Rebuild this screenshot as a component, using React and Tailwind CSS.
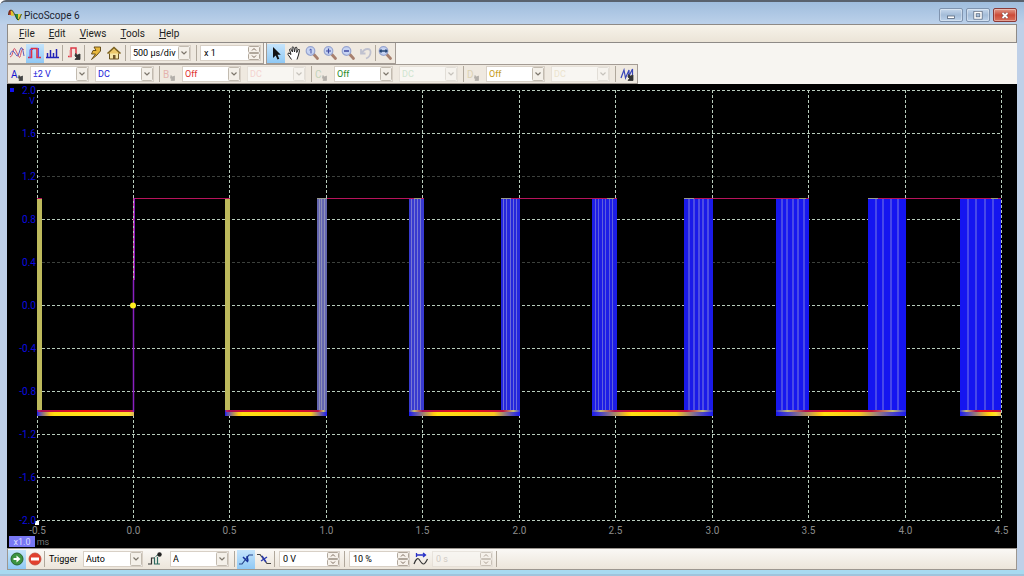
import React from "react";

const cx = (...c) => c.filter(Boolean).join(" ");

function Sep() {
  return <span className="h-4 w-px shrink-0 bg-[#b0a89c]" />;
}

function Select({ label, value, options = [], color = "text-black", className = "w-[59px]", disabled }) {
  return (
    <div className={cx("relative flex h-4 shrink-0 border", disabled ? "border-[#e6e0d8] bg-[#f8f6f2]" : "border-[#d8d0c6] bg-white", className)}>
      <select
        aria-label={label}
        disabled={disabled}
        defaultValue={value}
        className={cx("h-full w-full appearance-none bg-transparent pl-0.5 text-[9px] leading-[14px] opacity-100 outline-none", color)}
      >
        {[value, ...options].map((o) => (
          <option key={o}>{o}</option>
        ))}
      </select>
      <svg viewBox="0 0 12 14" className={cx("pointer-events-none absolute right-0 top-0 h-[14px] w-3", disabled && "opacity-40")}>
        <rect x=".5" y=".5" width="11" height="13" rx="1" fill="#f4f0e9" stroke="#c2bbb0" />
        <path d="M3.500 5.500 6 8l2.500-2.500" fill="none" stroke="#7d766c" strokeWidth="1.200" />
      </svg>
    </div>
  );
}

function Spinner({ label, value, disabled }) {
  return (
    <div className={cx("flex h-4 w-[61px] shrink-0 border", disabled ? "border-[#e0dad2] bg-[#f8f6f2] opacity-60" : "border-[#d8d0c6] bg-white")}>
      <input
        aria-label={label}
        defaultValue={value}
        disabled={disabled}
        className={cx("min-w-0 flex-1 bg-transparent pl-[3px] text-[9px] leading-[14px] outline-none", disabled ? "text-[#b8b4ae]" : "text-black")}
      />
      <div className="flex w-3 flex-col">
        {["up", "down"].map((d) => (
          <button key={d} aria-label={label + " " + d} disabled={disabled} className="h-[7px] w-3">
            <svg viewBox="0 0 12 7" className="block h-[7px] w-3">
              <rect x=".5" y=".5" width="11" height="6" rx="1" fill="#f6f1ea" stroke="#b0a79b" />
              <path d={d === "up" ? "M4 4.500 6 2.500l2 2" : "M4 2.500l2 2 2-2"} fill="none" stroke="#7a6a5c" />
            </svg>
          </button>
        ))}
      </div>
    </div>
  );
}

function Tool({ label, active, disabled, children }) {
  return (
    <button
      aria-label={label}
      disabled={disabled}
      className={cx("flex h-[19px] w-[18px] shrink-0 items-center justify-center", active && "bg-linear-to-b from-[#c5e4fb] to-[#8fc9f5]", disabled && "opacity-35")}
    >
      <svg viewBox="0 0 16 16" className="size-4" fill="none">{children}</svg>
    </button>
  );
}

function Lens({ children }) {
  return (
    <>
      <path d="m9.500 9 4 4.500" stroke="#a8806e" strokeWidth="2.800" strokeLinecap="round" />
      <circle cx="6.500" cy="6" r="4.300" fill="#c6d3f2" stroke="#97a5d0" strokeWidth="1.200" />
      {children}
    </>
  );
}

const Corner = () => <path d="M8.500 8.500 10.500 10l2.500-1v5.500H8l1.500-2L8 11z" fill="#333" stroke="#333" strokeWidth=".8" />;

const CHANNELS = [
  { id: "A", hex: "#1515d0", color: "text-[#1a1ad8]", range: "±2 V" },
  { id: "B", hex: "#d05050", color: "text-[#e03030]", faint: "text-[#f4d3d0]", range: "Off" },
  { id: "C", hex: "#70a870", color: "text-[#1f8a2b]", faint: "text-[#cfe5d0]", range: "Off" },
  { id: "D", hex: "#b8a860", color: "text-[#c49a20]", faint: "text-[#ece4ce]", range: "Off" },
];

function Channel({ ch }) {
  const off = ch.range === "Off";
  return (
    <div className="flex items-center">
      <button aria-label={"Channel " + ch.id + " options"} className={cx("w-[22px] shrink-0", off && "opacity-35")}>
        <svg viewBox="0 0 22 16" className="block h-4 w-[22px]">
          <text x="3" y="12" fontSize="10" fill={ch.hex}>{ch.id}</text>
          <path d="M11 9.500 12.500 11l2-1v4.500H11l.5-1.500L10.500 12z" fill="#444" stroke="#444" strokeWidth=".8" />
        </svg>
      </button>
      <div className="flex gap-1.5">
        <Select label={"Channel " + ch.id + " range"} value={ch.range} options={["±5 V"]} color={ch.color} />
        <Select label={"Channel " + ch.id + " coupling"} value="DC" options={["AC"]} color={off ? ch.faint : ch.color} disabled={off} />
      </div>
      <span className="w-[5px]" />
      <Sep />
    </div>
  );
}

const BURSTS = [
  { x: 37, w: 5, fill: "#bdb95c" },
  { x: 225, w: 5, fill: "#bdb95c" },
  { x: 317, w: 10, fill: "#6466b0", lines: 3, line: "#9092b8" },
  { x: 409, w: 15, fill: "#383ad0", lines: 4, line: "#7879d4" },
  { x: 501, w: 19, fill: "#2426dc", lines: 5, line: "#6c6dda" },
  { x: 592, w: 25, fill: "#1d1de6", lines: 6, line: "#5e5fdc" },
  { x: 684, w: 29, fill: "#1a1ae8", lines: 5, line: "#4c4de4", lw: 2 },
  { x: 776, w: 33, fill: "#1717ee", lines: 5, line: "#494ae6", lw: 2 },
  { x: 868, w: 38, fill: "#1515f0", lines: 4, line: "#4748ea", lw: 2 },
  { x: 960, w: 41, fill: "#1515f0", lines: 4, line: "#4748ea", lw: 2 },
];
const HIGHS = [[134, 230], [317, 424], [501, 617], [684, 809], [868, 1001]];
const LOWS = [
  { a: 37, b: 134, l: 5, r: 0 },
  { a: 225, b: 327, l: 5, r: 10 },
  { a: 409, b: 520, l: 15, r: 19 },
  { a: 592, b: 713, l: 25, r: 29 },
  { a: 776, b: 906, l: 33, r: 38 },
  { a: 960, b: 1001, l: 18, r: 0 },
];
const VOLTS = ["2.0", "1.6", "1.2", "0.8", "0.4", "0.0", "-0.4", "-0.8", "-1.2", "-1.6", "-2.0"];
const TIMES = ["-0.5", "0.0", "0.5", "1.0", "1.5", "2.0", "2.5", "3.0", "3.5", "4.0", "4.5"];
const gx = (i) => Math.floor(37 + i * 96.45) + 0.5;
const gy = (i) => 90.5 + i * 43;

function Scope() {
  return (
    <svg viewBox="7 84 1010 464" className="block h-full w-full" role="img" aria-label="Oscilloscope trace">
      <defs>
        {LOWS.map(({ a, b, l, r }, i) => {
          const w = b - a;
          return (
            <React.Fragment key={i}>
              <linearGradient id={"y" + i}>
                <stop offset="0" stopColor="#1a1af0" />
                <stop offset={(l * 0.4) / w} stopColor="#5048c0" />
                <stop offset={(l * 1.1 + 8) / w} stopColor="#ffc814" />
                <stop offset={(l * 1.1 + 12) / w} stopColor="#ffe010" />
                <stop offset={1 - (r * 1.1 + 5) / w} stopColor={r ? "#f8c820" : "#ffe030"} />
                <stop offset={1 - (r * 0.4) / w} stopColor={r ? "#5048c0" : "#d8b060"} />
                <stop offset="1" stopColor={r ? "#1a1af0" : "#d0b070"} />
              </linearGradient>
              <linearGradient id={"r" + i}>
                <stop offset="0" stopColor="#3030e0" />
                <stop offset={(l * 0.35) / w} stopColor={l > 5 ? "#c8c070" : "#c02060"} />
                <stop offset={(l * 0.9) / w} stopColor="#b01050" />
                <stop offset="0.5" stopColor="#f01010" />
                <stop offset={1 - (r * 0.9) / w} stopColor="#c01040" />
                <stop offset={1 - (r * 0.35) / w} stopColor={r ? "#c8c070" : "#c01040"} />
                <stop offset="1" stopColor={r ? "#3030e0" : "#c01040"} />
              </linearGradient>
            </React.Fragment>
          );
        })}
      </defs>
      <g strokeDasharray="3 2" fill="none">
        {VOLTS.map((v, i) => (
          <path key={v} d={`M37 ${gy(i)}H1002`} stroke={i === 2 || i === 4 ? "#3c403c" : "#b8ccbc"} />
        ))}
        {TIMES.map((t, i) => (
          <path key={t} d={`M${gx(i)} 90V520`} stroke="#b8ccbc" />
        ))}
      </g>
      {BURSTS.map(({ x, w, fill, lines = 0, line, lw = 1 }) => (
        <g key={x}>
          <rect x={x} y="198" width={w} height="217" fill={fill} />
          {Array.from({ length: lines }, (_, k) => (
            <rect key={k} x={Math.round(x + ((k + 1) * w) / (lines + 1)) - 1} y="199" width={lw} height="212" fill={line} />
          ))}
        </g>
      ))}
      {HIGHS.map(([a, b], i) => (
        <g key={a}>
          <rect x={a} y="198" width={b - a} height="1" fill="#b8145c" />
          {i > 0 && <rect x={a} y="198" width="10" height="1" fill="#9a9a90" />}
          {i > 0 && <rect x={b - 10} y="198" width="7" height="1" fill="#9a9a70" />}
        </g>
      ))}
      <rect x="37" y="198" width="5" height="1" fill="#b8145c" />
      {LOWS.map(({ a, b }, i) => (
        <g key={a}>
          <rect x={a} y="410" width={b - a} height="2" fill={`url(#r${i})`} />
          <rect x={a} y="412" width={b - a} height="4" fill={`url(#y${i})`} />
        </g>
      ))}
      <path d="M134.500 198V280" stroke="#8a18c0" />
      <path d="M133.500 198V280" stroke="#c05090" strokeDasharray="3 2" />
      <path d="M133.500 280V412" stroke="#8a20c0" strokeWidth="1.500" />
      <circle cx="133" cy="305.500" r="3" fill="#ffee20" />
      <rect x="10" y="88" width="4" height="4" fill="#1010f0" />
      <rect x="35" y="521" width="4" height="4" fill="#fff" />
      <g fontSize="10" fill="#0c0ce0" textAnchor="end">
        {VOLTS.map((v, i) => (
          <text key={v} x="36" y={gy(i) + 3}>{v}</text>
        ))}
        <text x="35" y="104" fontSize="9">V</text>
      </g>
      <g fontSize="10" fill="#8c8c8c" textAnchor="middle">
        {TIMES.map((t, i) => (
          <text key={t} x={gx(i)} y="534">{t}</text>
        ))}
        <text x="43" y="545" fontSize="9" fill="#777">ms</text>
      </g>
      <rect x="9" y="536" width="26" height="11" fill="#7878f4" />
      <text x="22" y="545" fontSize="9" fill="#dcdcff" textAnchor="middle">x1.0</text>
    </svg>
  );
}

function WinButton({ label, close, children }) {
  return (
    <button
      aria-label={label}
      className={cx(
        "flex h-[14px] w-6 items-center justify-center rounded-xs border shadow-[inset_0_0_0_1px_rgba(255,255,255,0.35)]",
        close ? "border-[#8a3a38] bg-linear-to-b from-[#e09a8c] via-[#cc4a38] to-[#d8705c]" : "border-[#7f93ae] bg-linear-to-b from-[#c6d8ec] via-[#a4bcd8] to-[#bcd2ea]"
      )}
    >
      <svg viewBox="0 0 10 9" className="h-[9px] w-2.5">{children}</svg>
    </button>
  );
}

export default function App() {
  return (
    <div className="flex h-screen flex-col overflow-hidden rounded-tl-md border-t-2 border-t-[#59626e] bg-[#bfd0e8] font-['Roboto','Liberation_Sans',sans-serif] text-[9px] leading-none text-[#222]">
      <header className="flex h-[22px] shrink-0 items-center bg-linear-to-b from-[#9fbddd] to-[#bcd1ea] pl-2 pr-[7px]">
        <svg viewBox="0 0 14 12" className="mr-0.5 mt-1 h-3 w-3.5">
          <path d="M0 6 .8 2Q2.500-.5 4.500 2l1 4z" fill="#c4342c" />
          <path d="M2.800.8q2.500 0 3.200 6H2.800z" fill="#e5c42a" />
          <path d="M6.500 5h7l-1 4q-2 4-4 1z" fill="#2e8c38" />
          <path d="M10 5h3.500l-1 5-2.500 2z" fill="#e5cf3a" />
          <path d="M.5 6Q1 1 3 1t4 5 3 5 3.500-6" fill="none" stroke="#26351f" strokeWidth=".8" />
        </svg>
        <h1 className="mt-1.5 flex-1 text-[10px] leading-3 text-[#1c2430]">PicoScope 6</h1>
        <div className="mt-1 flex gap-[3px]">
          <WinButton label="Minimize"><rect x="1.500" y="5" width="7" height="2.500" fill="#fff" stroke="#56657a" strokeWidth=".8" /></WinButton>
          <WinButton label="Maximize"><rect x="2" y="1.500" width="6" height="5.500" fill="none" stroke="#56657a" strokeWidth="3" /><rect x="2" y="1.500" width="6" height="5.500" fill="none" stroke="#fff" strokeWidth="1.600" /></WinButton>
          <WinButton label="Close" close><path d="m2.500 2 5 5m0-5-5 5" stroke="#684848" strokeWidth="3" /><path d="m2.500 2 5 5m0-5-5 5" stroke="#fff" strokeWidth="1.800" /></WinButton>
        </div>
      </header>

      <div className="mx-[7px] flex min-h-0 flex-1 flex-col bg-[#f7f5f1]">
        <nav className="flex h-[19px] shrink-0 items-center gap-[14px] border border-[#8e8a86] bg-linear-to-b from-[#f7f3ea] to-[#ebe4d7] pl-[11px] text-[10px]">
          {["File", "Edit", "Views", "Tools", "Help"].map((m) => (
            <button key={m} className="leading-3"><u>{m[0]}</u>{m.slice(1)}</button>
          ))}
        </nav>

        <div className="flex h-[21px] shrink-0 items-stretch gap-0.5">
          <div className="flex items-center border border-t-0 border-[#a39b94] bg-[#efe9e0]">
            <Tool label="Scope mode">
              <path d="M1 12Q3 12 4 7t2-3 2 4 2 4 2-4 3-3" stroke="#d85868" />
              <path d="M1 10q2-6 4-3t3 4 3-6 4 6" stroke="#5c5cc0" />
            </Tool>
            <Tool label="Persistence mode" active>
              <path d="M1 12.500h3.500v-9H10v9h4" stroke="#e03040" strokeWidth="1.600" />
              <path d="M3 13V4.500h3M11.500 3v9.500" stroke="#6a48d8" />
            </Tool>
            <Tool label="Spectrum mode"><path d="M2.500 13V8m3 5V5m3 8V8m3 5V4M1 12.500h13" stroke="#2222b8" strokeWidth="1.500" /></Tool>
            <Sep />
            <span className="w-[3px]" />
            <Tool label="Persistence options"><path d="M1 11.500h3V3h5v6" stroke="#dc3a48" strokeWidth="1.500" /><path d="M3 5v7" stroke="#ef9a9a" /><Corner /></Tool>
            <Sep />
            <span className="w-0.5" />
            <Tool label="Auto setup"><path d="M6 2h6.500v4L9 10l-5.500 4.500L7.500 9H3.500L5 5.500h3z" fill="#e8b83c" stroke="#5d4410" strokeWidth=".9" /></Tool>
            <Tool label="Home"><path d="M3.500 8v6h9V8" fill="#f5e6a8" stroke="#6a5420" /><path d="M1.500 8.500 8 2.500l6.500 6" stroke="#7a6020" strokeWidth="1.600" fill="#ecc86a" /><path d="M7 10h2.500v4H7z" fill="#705428" /></Tool>
            <span className="w-0.5" />
            <Sep />
            <span className="w-1" />
            <Select label="Timebase" value="500 µs/div" options={["1 ms/div"]} className="w-[61px]" />
            <span className="w-[5px]" />
            <Sep />
            <span className="w-[3px]" />
            <Spinner label="Horizontal zoom" value="x 1" />
            <span className="w-0.5" />
          </div>
          <div className="flex items-center border border-t-0 border-[#a39b94] bg-[#efe9e0]">
            <Tool label="Select" active><path d="M5 2v11l2.700-2.500 1.800 4 1.800-.8-1.800-4h3.300z" fill="#111" /></Tool>
            <Tool label="Hand">
              <path d="M5.500 14.500 2 9.500Q1.500 8 3 8l2 1.500L3.500 4.500q.5-1.500 1.700 0L6.500 7 6 2.500q1-1.500 1.800 0L8.500 7l.8-4.500q1.200-1 1.700.5L10.700 7.500l1.600-3q1.400-.5 1.200 1L12.500 10l-1.500 4.500" fill="#fff" stroke="#222" />
            </Tool>
            <Tool label="Window zoom"><Lens><path d="M5.500 5 7 4v4.500" stroke="#4b56a8" /></Lens></Tool>
            <Tool label="Zoom in"><Lens><path d="M4 6h5M6.500 3.500v5" stroke="#3c48a0" strokeWidth="1.200" /></Lens></Tool>
            <Tool label="Zoom out"><Lens><path d="M4 6h5" stroke="#3c48a0" strokeWidth="1.300" /></Lens></Tool>
            <Tool label="Undo zoom" disabled><path d="M3 4v4.500h4.500M3.500 8.500Q6 4 9.500 4t3 4-4.500 5.500" stroke="#6878b0" strokeWidth="1.800" /></Tool>
            <Sep />
            <Tool label="Zoom to full view"><Lens><path d="M3 6h7M4.500 4.500 3 6l1.500 1.500m4-3L10 6 8.500 7.500" stroke="#284878" strokeWidth="1.300" /></Lens></Tool>
            <span className="w-px" />
          </div>
        </div>

        <div className="flex h-[20px] shrink-0 items-stretch">
          <div className="flex items-center border border-[#a39b94] bg-[#efe9e0]">
            {CHANNELS.map((ch) => <Channel key={ch.id} ch={ch} />)}
            <span className="w-[3px]" />
            <Tool label="Math channels"><path d="M1 12 4 4l1.500 8L9 4v6l3.500-7v6" stroke="#3a46b8" strokeWidth="1.200" /><Corner /></Tool>
          </div>
        </div>

        <main className="min-h-0 flex-1 bg-black"><Scope /></main>

        <footer className="flex h-[22px] shrink-0 items-center border border-[#9c9690] bg-linear-to-b from-[#faf8f5] to-[#ece5da] text-black">
          <Tool label="Start" active><circle cx="8" cy="8" r="6" fill="#3c9440" stroke="#25642c" /><path d="M4.500 7h3V4.500L11.500 8l-4 3.500V9h-3z" fill="#fff" /></Tool>
          <Tool label="Stop"><circle cx="8" cy="8" r="6" fill="#e2402e" stroke="#c04838" strokeWidth=".8" /><path d="M4 6.500h8v3H4z" fill="#fff" /></Tool>
          <Sep />
          <span className="ml-1 w-[34px]">Trigger</span>
          <Select label="Trigger mode" value="Auto" options={["None", "Repeat", "Single"]} className="w-[60px]" />
          <span className="w-[3px]" />
          <Tool label="Advanced triggers"><path d="M1 13h3.500V7H8" stroke="#333" strokeWidth="1.200" /><path d="M7.500 6.500V13H13M10.500 6v7" stroke="#2c6b60" strokeWidth="1.200" /><path d="m8.500 5.500 3-2" stroke="#2c6b60" /><circle cx="12.500" cy="3.500" r="2.200" fill="#222" /></Tool>
          <span className="w-1.5" />
          <Select label="Trigger source" value="A" options={["B", "C", "D"]} />
          <span className="w-[5px]" />
          <Sep />
          <span className="w-0.5" />
          <Tool label="Rising edge" active><path d="M1 13h3l7-9h4" stroke="#26468c" strokeWidth="1.200" /><path d="M5 6l5 5M9 5l1 5" stroke="#16309a" strokeWidth="1.500" /></Tool>
          <Tool label="Falling edge"><path d="M1 3.500h3l7 9h4" stroke="#444" strokeWidth="1.200" /><path d="M5 10l6-4M6 5l4 6" stroke="#2a3ab0" strokeWidth="1.400" /></Tool>
          <span className="w-px" />
          <Sep />
          <span className="w-1" />
          <Spinner label="Trigger threshold" value="0 V" />
          <span className="w-1" />
          <Sep />
          <span className="w-1" />
          <Spinner label="Pre-trigger" value="10 %" />
          <span className="w-0.5" />
          <Tool label="Post-trigger delay"><path d="M3 4h9M10 2l2.500 2L10 6M3.500 2v4" stroke="#2730c8" strokeWidth="1.300" /><path d="M1 13Q4 5 6.500 9t4 4 4-5" stroke="#333" strokeWidth="1.200" /></Tool>
          <span className="w-0.5" />
          <Spinner label="Trigger delay" value="0 s" disabled />
          <span className="w-[3px]" />
          <Sep />
        </footer>
      </div>
      <div className="h-1.5 shrink-0 border-b-2 border-[#9fc4dc] bg-[#a8daf0]" />
    </div>
  );
}
